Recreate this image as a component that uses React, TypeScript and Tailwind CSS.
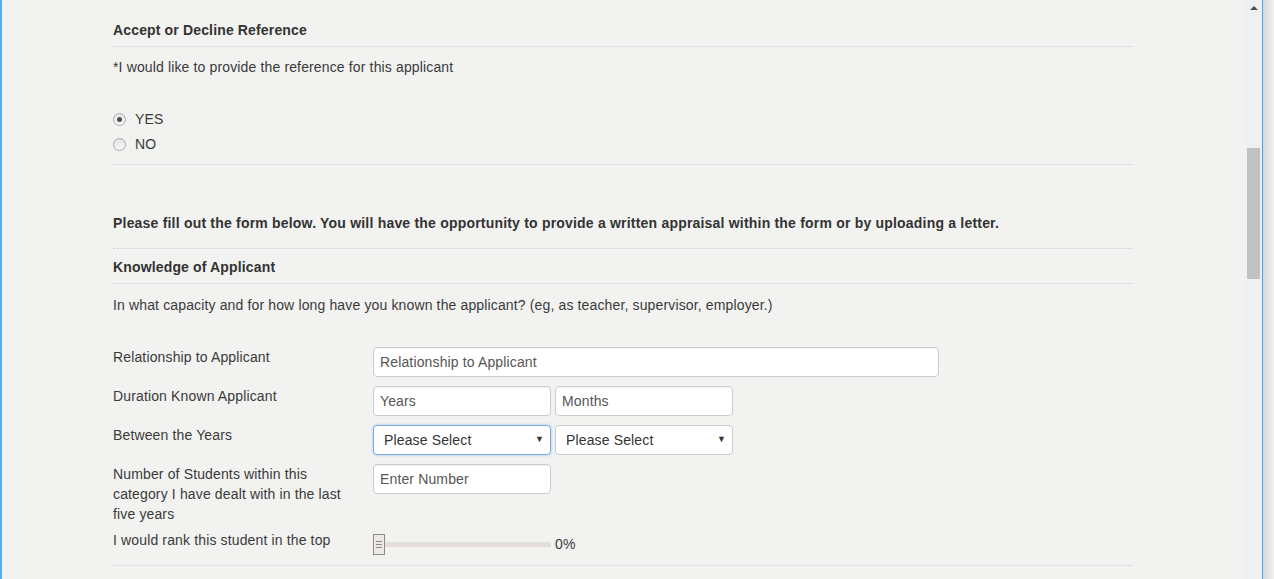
import React from "react";

const Divider = () => <div className="border-t border-dotted border-[#cfcfcf]" />;

const Radio = ({ checked, label }: { checked?: boolean; label: string }) => (
  <label className="flex h-[25px] items-center pt-px">
    <span className="flex h-[13px] w-[13px] items-center justify-center rounded-full border border-[#a9a9a9] bg-gradient-to-b from-[#e4e4e4] to-[#f8f8f8]">
      {checked && <span className="h-[5px] w-[5px] rounded-full bg-[#505050]" />}
    </span>
    <span className="ml-[9px]">{label}</span>
  </label>
);

const Row = ({ label, children }: { label: string; children: React.ReactNode }) => (
  <div className="flex">
    <div className="w-[260px] shrink-0 pr-[20px] leading-[20px]">{label}</div>
    <div className="flex gap-[4px]">{children}</div>
  </div>
);

const Input = ({ placeholder, width }: { placeholder: string; width: string }) => (
  <div
    className={`${width} flex h-[30px] items-center rounded-[4px] border border-[#cccccc] bg-white pl-[6px] text-[#555] shadow-[inset_0_1px_1px_rgba(0,0,0,0.06)]`}
  >
    {placeholder}
  </div>
);

const Select = ({ focused }: { focused?: boolean }) => (
  <div
    className={`flex h-[30px] w-[178px] items-center justify-between rounded-[4px] border bg-white pl-[10px] pr-[6px] text-[#333] ${
      focused ? "border-[#7fa9e6] shadow-[0_0_3px_rgba(102,175,233,0.6)]" : "border-[#cccccc]"
    }`}
  >
    <span>Please Select</span>
    <span className="text-[9px] text-[#333]">▼</span>
  </div>
);

export default function App() {
  return (
    <div
      className="flex h-[579px] w-[1274px] overflow-hidden bg-[#f2f2f0] text-[14px] tracking-[0.14px] text-[#3a3a3a]"
      style={{ fontFamily: '"Liberation Sans", Arial, sans-serif' }}
    >
      <div className="w-[2px] shrink-0 bg-[#55aef5]" />
      <div className="w-[1243px] shrink-0">
        <div className="ml-[111px] w-[1020px]">
          <div className="pt-[20px] pb-[6px] font-bold leading-[20px] tracking-[0.15px] text-[#333]">
            Accept or Decline Reference
          </div>
          <Divider />
          <div className="mt-[10px] leading-[20px]">*I would like to provide the reference for this applicant</div>
          <div className="mt-[29px]">
            <Radio checked label="YES" />
            <Radio label="NO" />
          </div>
          <div className="mt-[8px]">
            <Divider />
          </div>
          <div className="mt-[48px] mb-[15px] font-bold leading-[20px] tracking-[0.2px] text-[#333]">
            Please fill out the form below. You will have the opportunity to provide a written appraisal within the form or by uploading a letter.
          </div>
          <Divider />
          <div className="mt-[8px] mb-[6px] font-bold leading-[20px] tracking-[0.15px] text-[#333]">
            Knowledge of Applicant
          </div>
          <Divider />
          <div className="mt-[11px] leading-[20px]">
            In what capacity and for how long have you known the applicant? (eg, as teacher, supervisor, employer.)
          </div>
          <div className="mt-[32px] flex flex-col gap-[9px]">
            <Row label="Relationship to Applicant">
              <Input placeholder="Relationship to Applicant" width="w-[566px]" />
            </Row>
            <Row label="Duration Known Applicant">
              <Input placeholder="Years" width="w-[178px]" />
              <Input placeholder="Months" width="w-[178px]" />
            </Row>
            <Row label="Between the Years">
              <Select focused />
              <Select />
            </Row>
            <Row label="Number of Students within this category I have dealt with in the last five years">
              <Input placeholder="Enter Number" width="w-[178px]" />
            </Row>
          </div>
          <div className="mt-[6px] flex">
            <div className="w-[260px] shrink-0 leading-[20px]">I would rank this student in the top</div>
            <div className="flex items-center pt-[4px]">
              <div className="flex h-[21px] w-[12px] flex-col items-center justify-center gap-[2px] border border-[#8f8a85] bg-[#ece9e5]">
                <span className="h-px w-[6px] bg-[#8f8a85]" />
                <span className="h-px w-[6px] bg-[#8f8a85]" />
                <span className="h-px w-[6px] bg-[#8f8a85]" />
              </div>
              <div className="h-[5px] w-[166px] bg-[#e3ded9]" />
              <span className="ml-[4px]">0%</span>
            </div>
          </div>
          <div className="mt-[10px]">
            <Divider />
          </div>
        </div>
      </div>
      <div className="relative w-[17px] shrink-0 bg-[#f0f0f0]">
        <div className="absolute left-[5px] top-[6px] h-0 w-0 border-x-[4px] border-b-[4px] border-x-transparent border-b-[#505050]" />
        <div className="absolute left-[2px] top-[148px] h-[131px] w-[13px] bg-[#c1c1c1]" />
      </div>
      <div className="w-[1px] shrink-0 bg-[#3aa3f3]" />
      <div className="flex-1 bg-gradient-to-r from-[#d9d9d9] to-[#efefef]" />
    </div>
  );
}
